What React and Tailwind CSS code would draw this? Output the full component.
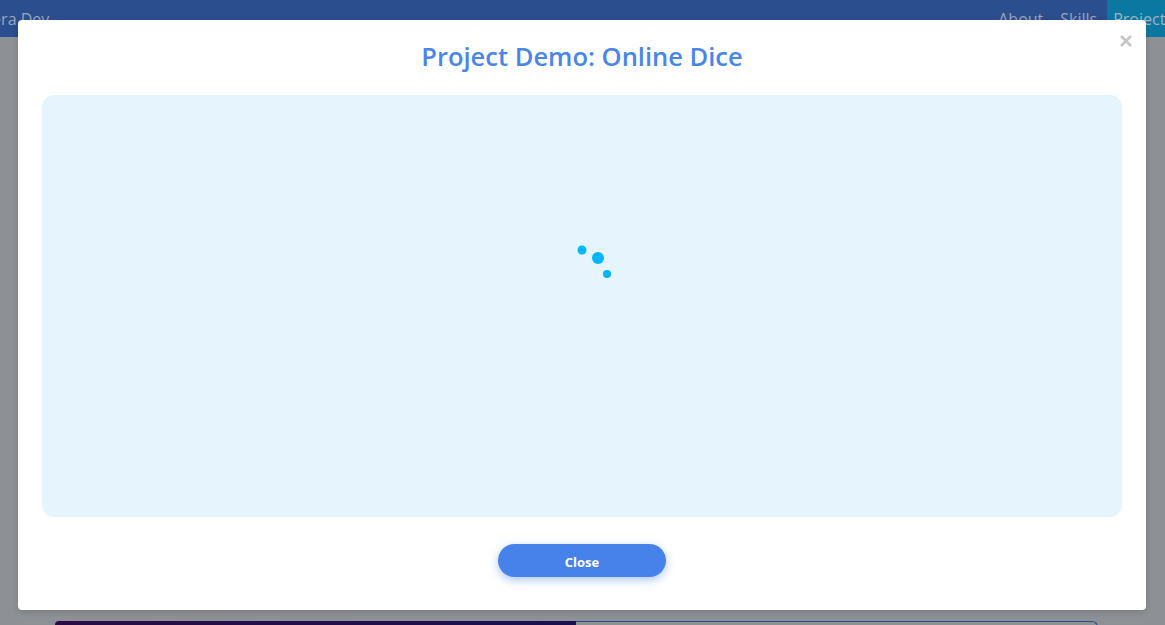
import React from "react";

const App = () => {
  return (
    <div
      className="relative h-[625px] w-[1165px] overflow-hidden bg-[#8d9094]"
      style={{ fontFamily: '"Open Sans", "Noto Sans", sans-serif' }}
    >
      {/* page behind the dialog */}
      <div className="flex h-[37px] items-center justify-between bg-[#2b4e8e] text-[16px] text-[#9aa6bd]">
        <span className="-ml-[18px]">Aera Dev</span>
        <div className="-mr-[10px] flex h-full items-center">
          <span className="mr-[17px]">About</span>
          <span className="mr-[10px]">Skills</span>
          <span className="flex h-full items-center bg-[#0b78a1] pl-[6px] pr-[2px] text-[#9fb3c4]">
            Projects
          </span>
        </div>
      </div>
      <div className="mt-[584px] ml-[55px] flex h-[8px] w-[1043px]">
        <div className="w-[521px] rounded-tl-[4px] bg-gradient-to-r from-[#2a0c45] to-[#1a1050]"></div>
        <div className="flex-1 rounded-tr-[6px] border-t border-r border-[#2b4e8e] bg-[#8d9094]"></div>
      </div>

      {/* modal */}
      <div className="absolute top-[20px] left-[18px] flex h-[590px] w-[1128px] flex-col items-center rounded-[4px] bg-white shadow-[0_2px_6px_rgba(0,0,0,0.15)]">
        <button className="absolute top-[14px] right-[13px] flex h-[14px] w-[14px] items-center justify-center">
          <svg width="14" height="14" viewBox="0 0 14 14">
            <path d="M2 2 L12 12 M12 2 L2 12" stroke="#c6c6c6" strokeWidth="2.6" strokeLinecap="butt" />
          </svg>
        </button>
        <h2 className="mt-[18px] text-[25.5px] font-semibold leading-[36px] text-[#4a86e8]">
          Project Demo: Online Dice
        </h2>
        <div className="mt-[21px] flex h-[422px] w-[1080px] justify-center rounded-[12px] bg-[#e6f4fe] pt-[135px]">
          <svg width="60" height="60" viewBox="0 0 60 60">
            <circle cx="30" cy="20" r="4.5" fill="#00b7ff" />
            <circle cx="46" cy="28" r="6" fill="#00b7ff" />
            <circle cx="55" cy="44" r="4" fill="#00b7ff" />
          </svg>
        </div>
        <button className="mt-[27px] h-[33px] w-[168px] rounded-full bg-[#4682ea] pt-[4px] text-[13px] font-bold text-white shadow-[0_3px_10px_rgba(70,130,234,0.45)]">
          Close
        </button>
      </div>
    </div>
  );
};

export default App;
